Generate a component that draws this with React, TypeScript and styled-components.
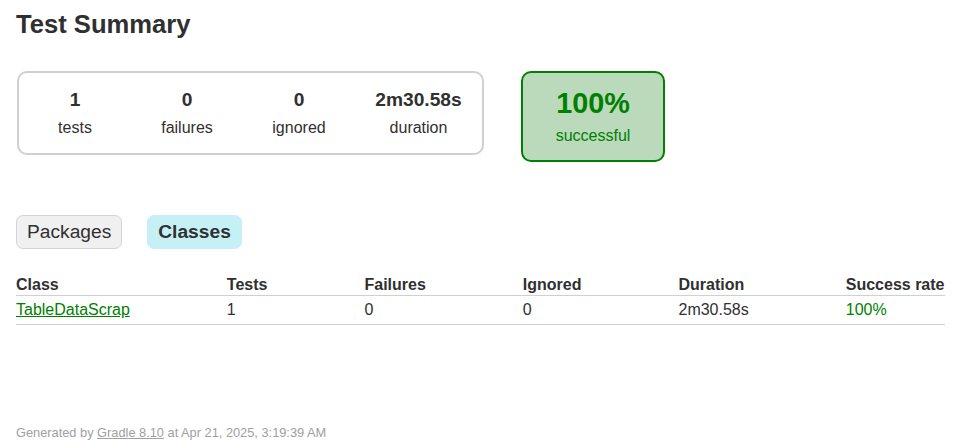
import React from 'react';
import styled, { createGlobalStyle } from 'styled-components';

const GlobalStyle = createGlobalStyle`
  html, body { margin: 0; padding: 0; background: #ffffff; }
  body {
    font-family: "Liberation Sans", Arial, sans-serif;
    font-size: 16px;
    color: #303030;
  }
`;

const Content = styled.div`
  padding: 0 8px 20px 16px;
  display: flex;
  flex-direction: column;
  align-items: flex-start;
`;

const Title = styled.h1`
  margin: 10px 0 0;
  font-size: 25.6px;
  font-weight: bold;
  line-height: normal;
  white-space: nowrap;
`;

const Summary = styled.div`
  display: flex;
  align-items: flex-start;
  margin-top: 32px;
  padding-left: 1px;
`;

const SummaryGroup = styled.div`
  display: flex;
  border: solid 2px #d0d0d0;
  border-radius: 10px;
`;

const InfoBox = styled.div<{ $w: number }>`
  width: ${(p) => p.$w}px;
  padding: 16px 1px;
  text-align: center;
`;

const Counter = styled.div`
  font-size: 19.2px;
  font-weight: bold;
  line-height: normal;
  margin-bottom: 8px;
`;

const Label = styled.p`
  margin: 0;
  line-height: normal;
`;

const SuccessBox = styled.div`
  width: 140px;
  margin-left: 37px;
  padding: 15px 0;
  text-align: center;
  border: solid 2px #008000;
  border-radius: 10px;
  background-color: #bbd9bb;
  color: #008000;
`;

const Percent = styled.div`
  font-size: 28.8px;
  font-weight: bold;
  line-height: 30.6px;
  margin-bottom: 8px;
`;

const TabLinks = styled.ul`
  display: flex;
  list-style: none;
  margin: 53px 0 0;
  padding: 0;
`;

const Tab = styled.li<{ $selected?: boolean }>`
  padding: 5px 10px;
  margin-right: 25px;
  border: solid 1px ${(p) => (p.$selected ? '#c5f0f5' : '#d4d4d4')};
  border-radius: 7px;
  background-color: ${(p) => (p.$selected ? '#c5f0f5' : '#f0f0f0')};
  font-size: 19.2px;
  line-height: normal;
  font-weight: ${(p) => (p.$selected ? 'bold' : 'normal')};
  color: #303030;
`;

const Table = styled.table`
  margin-top: 26px;
  border-collapse: collapse;
  border-bottom: solid #d0d0d0 1px;
`;

const Th = styled.th`
  text-align: left;
  white-space: nowrap;
  padding: 1px 1px 1px 6em;
  border-bottom: solid #d0d0d0 1px;
  line-height: normal;
  &:first-child { padding-left: 0; }
`;

const Td = styled.td<{ $success?: boolean }>`
  white-space: nowrap;
  padding: 5px 1px 5px 6em;
  line-height: normal;
  color: ${(p) => (p.$success ? '#008000' : '#303030')};
  &:first-child { padding-left: 0; }
`;

const ClassLink = styled.a`
  color: #008000;
  text-decoration: underline;
`;

const Footer = styled.div`
  margin-top: 100px;
  font-size: 12.8px;
  line-height: normal;
  white-space: nowrap;
  color: #a0a0a0;
`;

const FooterLink = styled.a`
  color: #a0a0a0;
  text-decoration: underline;
`;

const counters = [
  { value: '1', label: 'tests', w: 110 },
  { value: '0', label: 'failures', w: 110 },
  { value: '0', label: 'ignored', w: 110 },
  { value: '2m30.58s', label: 'duration', w: 125 },
];

export default function App() {
  return (
    <>
      <GlobalStyle />
      <Content>
        <Title>Test Summary</Title>
        <Summary>
          <SummaryGroup>
            {counters.map((c) => (
              <InfoBox key={c.label} $w={c.w}>
                <Counter>{c.value}</Counter>
                <Label>{c.label}</Label>
              </InfoBox>
            ))}
          </SummaryGroup>
          <SuccessBox>
            <Percent>100%</Percent>
            <Label>successful</Label>
          </SuccessBox>
        </Summary>
        <TabLinks>
          <Tab>Packages</Tab>
          <Tab $selected>Classes</Tab>
        </TabLinks>
        <Table>
          <thead>
            <tr>
              <Th>Class</Th>
              <Th>Tests</Th>
              <Th>Failures</Th>
              <Th>Ignored</Th>
              <Th>Duration</Th>
              <Th>Success rate</Th>
            </tr>
          </thead>
          <tbody>
            <tr>
              <Td>
                <ClassLink href="#">TableDataScrap</ClassLink>
              </Td>
              <Td>1</Td>
              <Td>0</Td>
              <Td>0</Td>
              <Td>2m30.58s</Td>
              <Td $success>100%</Td>
            </tr>
          </tbody>
        </Table>
        <Footer>
          Generated by <FooterLink href="#">Gradle 8.10</FooterLink> at Apr 21, 2025, 3:19:39 AM
        </Footer>
      </Content>
    </>
  );
}
